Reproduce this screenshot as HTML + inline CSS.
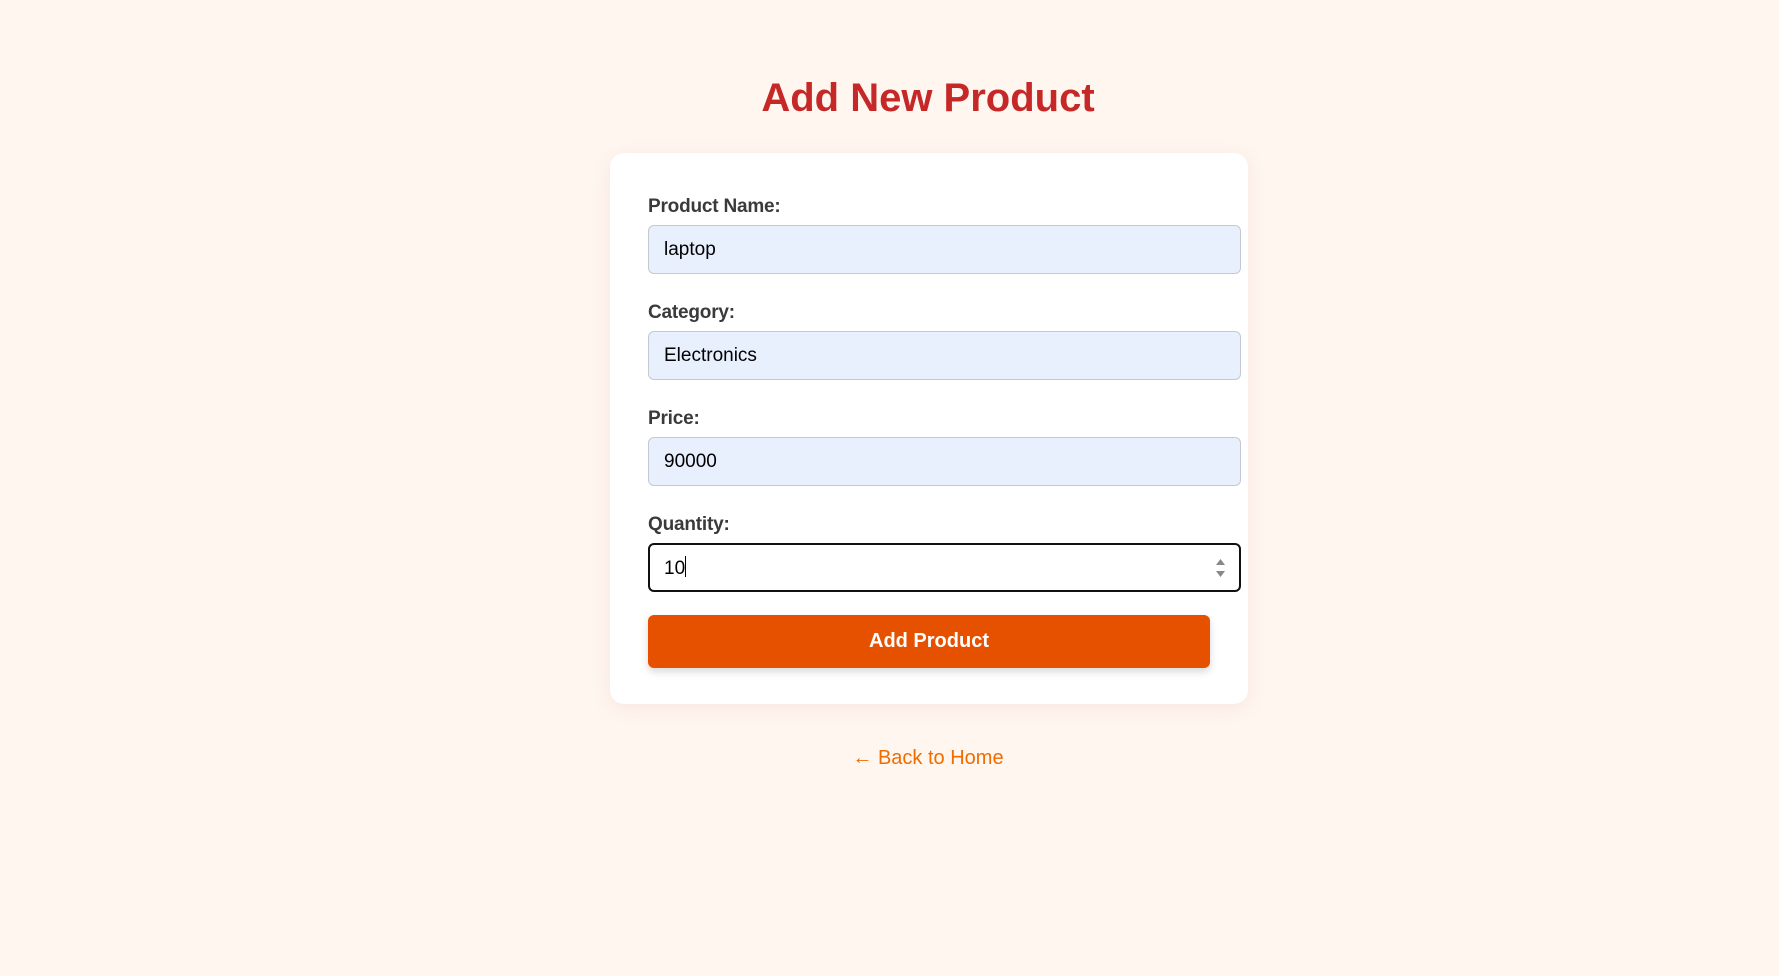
<!DOCTYPE html>
<html><head><meta charset="utf-8"><style>
*{box-sizing:border-box;margin:0;padding:0}
body{width:1779px;height:976px;background:#fff6f0;font-family:"Liberation Sans",sans-serif;position:relative;overflow:hidden}
h1{position:absolute;top:76px;left:0;width:1856px;text-align:center;color:#c62828;font-size:40px;font-weight:bold;letter-spacing:0}
.card{position:absolute;left:610px;top:153px;width:638px;height:551px;background:#fff;border-radius:14px;box-shadow:0 4px 18px rgba(200,150,120,0.15)}
label{position:absolute;left:38px;font-size:19px;color:#3a3a3a;line-height:26px;font-weight:bold;letter-spacing:-0.2px}
.in{position:absolute;left:38px;width:593px;height:49px;background:#e8f0fe;border:1px solid #c4c8d0;border-radius:6px;font-size:19px;color:#000;padding-left:15px;line-height:47px}
.q{background:#fff;border:2px solid #111;padding-left:14px}
.cur{display:inline-block;width:1px;height:21px;background:#000;vertical-align:-3px}
.spin{position:absolute;right:12px;top:12px;width:13px;height:22px}
.btn{position:absolute;left:38px;top:462px;width:562px;height:53px;background:#e65100;border-radius:6px;color:#fff;font-weight:bold;font-size:20px;text-align:center;line-height:53px;box-shadow:0 4px 8px rgba(0,0,0,0.15)}
.link{position:absolute;top:747px;left:0;width:1856px;text-align:center;color:#ef6c00;font-size:20px}
</style></head><body>
<h1>Add New Product</h1>
<div class="card">
<label style="top:41px">Product Name:</label>
<div class="in" style="top:72px">laptop</div>
<label style="top:147px">Category:</label>
<div class="in" style="top:178px">Electronics</div>
<label style="top:253px">Price:</label>
<div class="in" style="top:284px">90000</div>
<label style="top:359px">Quantity:</label>
<div class="in q" style="top:390px">10<span class="cur"></span>
<svg class="spin" viewBox="0 0 13 22"><path d="M6.5 2 L11 8 H2 Z" fill="#888"/><path d="M6.5 20 L11 14 H2 Z" fill="#888"/></svg></div>
<div class="btn">Add Product</div>
</div>
<div class="link">← Back to Home</div>
</body></html>
